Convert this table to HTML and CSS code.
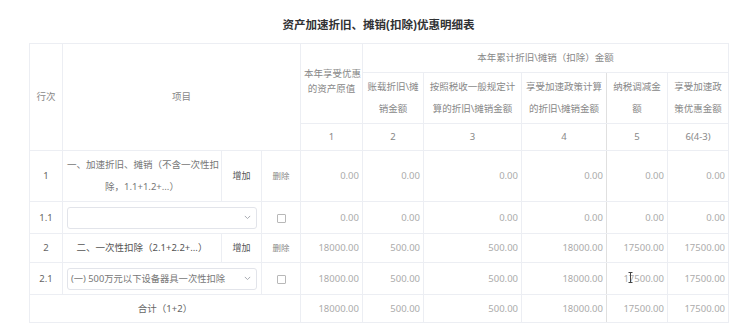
FILE: index.html
```html
<!DOCTYPE html>
<html lang="zh-CN">
<head>
<meta charset="utf-8">
<title>资产加速折旧、摊销(扣除)优惠明细表</title>
<link rel="stylesheet" href="styles.css">
</head>
<body>
<div class="page">
  <h1 class="title">资产加速折旧、摊销(扣除)优惠明细表</h1>
  <table class="grid">
    <colgroup>
      <col class="c-idx">
      <col class="c-item">
      <col class="c-add">
      <col class="c-del">
      <col class="c-n1">
      <col class="c-n2">
      <col class="c-n3">
      <col class="c-n4">
      <col class="c-n5">
      <col class="c-n6">
    </colgroup>
    <thead>
      <tr class="r-h1">
        <th rowspan="3">行次</th>
        <th colspan="3" rowspan="3">项目</th>
        <th rowspan="2" class="orig">本年享受优惠<br>的资产原值</th>
        <th colspan="5">本年累计折旧\摊销（扣除）金额</th>
      </tr>
      <tr class="r-h2">
        <th>账载折旧\摊<br>销金额</th>
        <th>按照税收一般规定计<br>算的折旧\摊销金额</th>
        <th class="sep">享受加速政策计算<br>的折旧\摊销金额</th>
        <th>纳税调减金<br>额</th>
        <th>享受加速政<br>策优惠金额</th>
      </tr>
      <tr class="r-h3">
        <th>1</th><th>2</th><th>3</th><th class="sep">4</th><th>5</th><th>6(4-3)</th>
      </tr>
    </thead>
    <tbody>
      <tr class="r-a">
        <td class="idx">1</td>
        <td class="item">一、加速折旧、摊销（不含一次性扣<br>除，1.1+1.2+...）</td>
        <td class="act">增加</td>
        <td class="act del">删除</td>
        <td class="num">0.00</td><td class="num">0.00</td><td class="num">0.00</td><td class="num sep">0.00</td><td class="num">0.00</td><td class="num">0.00</td>
      </tr>
      <tr class="r-b">
        <td class="idx">1.1</td>
        <td colspan="2" class="pick">
          <div class="sel"><span class="sel-text"></span><svg class="chev" width="7" height="5" viewBox="0 0 7 5"><path d="M0.8 0.9 L3.5 3.6 L6.2 0.9" fill="none" stroke="#a8abb2" stroke-width="1"/></svg></div>
        </td>
        <td class="act"><span class="chk"></span></td>
        <td class="num">0.00</td><td class="num">0.00</td><td class="num">0.00</td><td class="num sep">0.00</td><td class="num">0.00</td><td class="num">0.00</td>
      </tr>
      <tr class="r-c">
        <td class="idx">2</td>
        <td class="item">二、一次性扣除（2.1+2.2+...）</td>
        <td class="act">增加</td>
        <td class="act del">删除</td>
        <td class="num">18000.00</td><td class="num">500.00</td><td class="num">500.00</td><td class="num sep">18000.00</td><td class="num">17500.00</td><td class="num">17500.00</td>
      </tr>
      <tr class="r-b">
        <td class="idx">2.1</td>
        <td colspan="2" class="pick">
          <div class="sel"><span class="sel-text">(一) 500万元以下设备器具一次性扣除</span><svg class="chev" width="7" height="5" viewBox="0 0 7 5"><path d="M0.8 0.9 L3.5 3.6 L6.2 0.9" fill="none" stroke="#a8abb2" stroke-width="1"/></svg></div>
        </td>
        <td class="act"><span class="chk"></span></td>
        <td class="num">18000.00</td><td class="num">500.00</td><td class="num">500.00</td><td class="num sep">18000.00</td><td class="num"><span class="cur-wrap">17500.00<svg class="ibeam" width="5" height="11" viewBox="0 0 5 11"><path d="M0.5 0.5 H4.5 M2.5 0.5 V10.5 M0.5 10.5 H4.5" fill="none" stroke="#444" stroke-width="1"/></svg></span></td><td class="num">17500.00</td>
      </tr>
      <tr class="r-d">
        <td colspan="4" class="sum">合计（1+2）</td>
        <td class="num">18000.00</td><td class="num">500.00</td><td class="num">500.00</td><td class="num sep">18000.00</td><td class="num">17500.00</td><td class="num">17500.00</td>
      </tr>
    </tbody>
  </table>
</div>
</body>
</html>
```

FILE: styles.css
```css
html, body {
  margin: 0;
  background: #ffffff;
}

body {
  font-family: "Noto Sans", "Noto Sans CJK SC", sans-serif;
}

.page {
  width: 699px;
  padding: 17px 0 0 29px;
}

.title {
  margin: 0 0 10px;
  font-size: 11.5px;
  line-height: 16px;
  font-weight: bold;
  text-align: center;
  color: #303133;
}

.grid {
  border-collapse: collapse;
  table-layout: fixed;
  width: 699px;
  font-size: 9.5px;
  color: #8a8a8a;
}

.c-idx { width: 33px; }
.c-item { width: 159px; }
.c-add { width: 40px; }
.c-del { width: 39px; }
.c-n1 { width: 62px; }
.c-n2 { width: 61px; }
.c-n3 { width: 98px; }
.c-n4 { width: 85px; }
.c-n5 { width: 61px; }
.c-n6 { width: 61px; }

.grid th,
.grid td {
  border: 1px solid #eceef3;
  padding: 0 3px;
  font-weight: normal;
  text-align: center;
  vertical-align: middle;
  line-height: 22px;
  white-space: nowrap;
  overflow: hidden;
}

.grid .sep {
  border-right-color: #e0e0e0;
}

.grid th {
  color: #888888;
}

.grid th.orig {
  line-height: 15px;
  padding-bottom: 6px;
}

.r-h1 { height: 29px; }
.r-h2 { height: 51px; }
.r-h3 { height: 27px; }
.r-a { height: 51px; }
.r-b { height: 32px; }
.r-c { height: 29px; }
.r-d { height: 28px; }

.grid td.idx {
  color: #666666;
}

.grid td.item {
  color: #777777;
  padding: 0 4px;
}

.r-c td.item {
  color: #555555;
}

.grid td.act {
  color: #555555;
  font-size: 9px;
  padding: 0;
}

.grid td.del {
  color: #888888;
  font-size: 8.5px;
}

.grid td.num {
  text-align: right;
  color: #ababab;
  padding-right: 3px;
}

.grid td.sum {
  color: #666666;
}

.grid td.pick {
  padding: 0 4px;
}

.sel {
  display: flex;
  align-items: center;
  justify-content: space-between;
  height: 22px;
  box-sizing: border-box;
  border: 1px solid #e2e4ea;
  border-radius: 3px;
  padding: 0 5px 0 3px;
  background: #ffffff;
}

.sel-text {
  color: #777777;
  font-size: 9.3px;
  line-height: 20px;
}

.chev {
  display: block;
  flex: none;
}

.chk {
  display: inline-block;
  width: 9px;
  height: 9px;
  box-sizing: border-box;
  border: 1px solid #b8b8b8;
  border-radius: 1px;
  vertical-align: middle;
  background: #ffffff;
}

.cur-wrap {
  position: relative;
}

.ibeam {
  position: absolute;
  left: 5px;
  top: 50%;
  margin-top: -6px;
}
```
